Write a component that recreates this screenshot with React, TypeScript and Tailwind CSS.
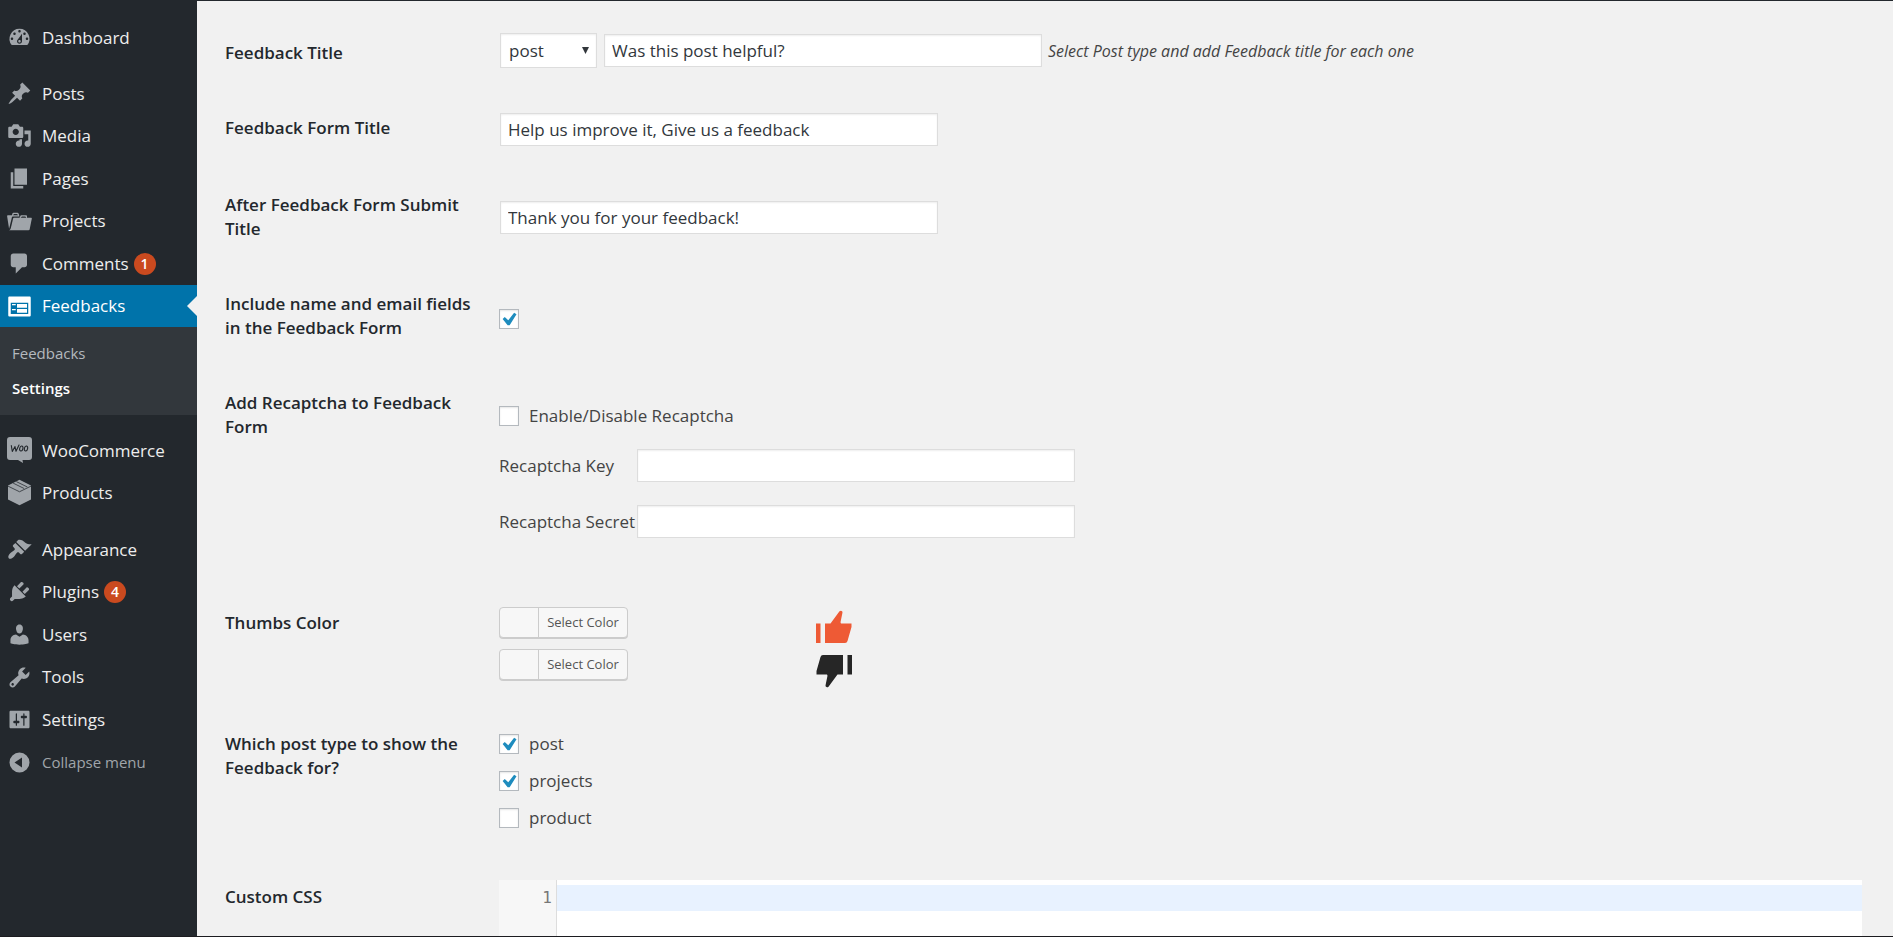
import { useState } from "react";
import type { ReactNode } from "react";

const ICONS = {
  dashboard:
    "M3.76 16h12.48A7.998 7.998 0 0 0 10 3a7.998 7.998 0 0 0-6.24 13zM10 4c.55 0 1 .45 1 1s-.45 1-1 1-1-.45-1-1 .45-1 1-1zM6 6c.55 0 1 .45 1 1s-.45 1-1 1-1-.45-1-1 .45-1 1-1zm8 0c.55 0 1 .45 1 1s-.45 1-1 1-1-.45-1-1 .45-1 1-1zm-5.37 5.55L12 7v6c0 1.1-.9 2-2 2s-2-.9-2-2c0-.57.24-1.08.63-1.45zM4 10c.55 0 1 .45 1 1s-.45 1-1 1-1-.45-1-1 .45-1 1-1zm12 0c.55 0 1 .45 1 1s-.45 1-1 1-1-.45-1-1 .45-1 1-1zm-5 3c0-.55-.45-1-1-1s-1 .45-1 1 .45 1 1 1 1-.45 1-1z",
  pin: "M10.44 3.02l1.82-1.82 6.36 6.35-1.83 1.82c-1.05-.68-2.48-.57-3.41.36l-.75.75c-.92.93-1.04 2.35-.35 3.41l-1.83 1.82-2.41-2.41-2.8 2.79c-.42.42-3.38 2.71-3.8 2.29s1.86-3.39 2.28-3.81l2.79-2.79L4.1 9.36l1.83-1.82c1.05.69 2.48.57 3.4-.36l.75-.75c.93-.92 1.05-2.35.36-3.41z",
  media:
    "M13 11V4c0-.55-.45-1-1-1h-1.67L9 1H5L3.67 3H2c-.55 0-1 .45-1 1v7c0 .55.45 1 1 1h10c.55 0 1-.45 1-1zM7 4.5c1.38 0 2.5 1.12 2.5 2.5S8.38 9.5 7 9.5 4.5 8.38 4.5 7 5.62 4.5 7 4.5zM14 6h5v10.5c0 1.38-1.12 2.5-2.5 2.5S14 17.88 14 16.5s1.12-2.5 2.5-2.5c.17 0 .34.02.5.05V9h-3V6zm-4 8.05V13h2v3.5c0 1.38-1.12 2.5-2.5 2.5S7 17.88 7 16.5 8.12 14 9.5 14c.17 0 .34.02.5.05z",
  page: "M6 15V2h10v13H6zm-1 1h8v2H3V5h2v11z",
  portfolio:
    "M4 5H.78c-.37 0-.74.32-.69.84l1.56 9.99S3.5 8.47 3.86 6.7c.11-.53.61-.7.98-.7H10s-.7-2.08-.77-2.31C9.11 3.25 8.89 3 8.45 3H5.14c-.36 0-.7.23-.8.64C4.25 4.04 4 5 4 5zm4.88 0h-4s.42-1 .87-1h2.13c.48 0 1 1 1 1zM2.67 16.25c-.31.47-.76.75-1.26.75h15.73c.54 0 .92-.31 1.03-.83.44-2.19 1.68-8.44 1.68-8.44.07-.5-.3-.73-.62-.73H16V5.53c0-.16-.26-.53-.66-.53h-3.76c-.52 0-.87.58-.87.58L10 7H5.59c-.32 0-.63.19-.69.5 0 0-1.59 6.7-1.72 7.33-.07.37-.22.99-.51 1.42zM15.38 7H11s.58-1 1.13-1h2.29c.71 0 .96 1 .96 1z",
  comment:
    "M5 2h9c1.1 0 2 .9 2 2v7c0 1.1-.9 2-2 2h-2l-5 5v-5H5c-1.1 0-2-.9-2-2V4c0-1.1.9-2 2-2z",
  feedback:
    "M2 2h16c.55 0 1 .45 1 1v14c0 .55-.45 1-1 1H2c-.55 0-1-.45-1-1V3c0-.55.45-1 1-1zm15 14V7H3v9h14zM4 8v1h3V8H4zm4 0v3h8V8H8zm-4 4v1h3v-1H4zm4 0v3h8v-3H8z",
  box: "M10 -.2L19.200 4.300V15.500L10 20.200.8 15.500V4.300z",
  appearance:
    "M14.48 11.06L7.41 3.99l1.5-1.5c.5-.56 2.3-.47 3.51.32 1.21.8 1.43 1.28 2.91 2.1 1.18.64 2.45 1.26 4.45.85zm-.71.71L6.7 4.7 4.93 6.47c-.39.39-.39 1.02 0 1.41l1.06 1.06c.39.39.39 1.03 0 1.42-.6.6-1.43 1.11-2.21 1.69-.35.26-.7.53-1.01.84C1.43 14.23.4 16.08 1.4 17.07c.99 1 2.84-.03 4.18-1.36.31-.31.58-.66.85-1.02.57-.78 1.08-1.61 1.69-2.21.39-.39 1.02-.39 1.41 0l1.06 1.06c.39.39 1.02.39 1.41 0z",
  plug: "M13.11 4.36L9.87 7.6 8 5.73l3.24-3.24c.35-.34 1.05-.2 1.56.32.52.51.66 1.21.31 1.55zm-8 1.77l.91-1.12 9.01 9.01-1.19.84c-.71.71-2.63 1.16-3.82 1.16H6.14L4.9 17.26c-.59.59-1.54.59-2.12 0-.59-.58-.59-1.53 0-2.12l1.24-1.24v-3.88c0-1.13.4-3.19 1.09-3.89zm7.26 3.97l3.24-3.24c.34-.35 1.04-.21 1.55.31.52.51.66 1.21.31 1.55l-3.24 3.25z",
  user: "M10 9.25c-2.27 0-2.73-3.44-2.73-3.44C7 4.02 7.82 2 9.97 2c2.16 0 2.98 2.02 2.71 3.81 0 0-.41 3.44-2.68 3.44zm0 2.57L12.72 10c2.39 0 4.52 2.33 4.52 4.53v2.49s-3.65 1.13-7.24 1.13c-3.65 0-7.24-1.13-7.24-1.13v-2.49c0-2.25 1.94-4.48 4.47-4.48z",
  wrench:
    "M16.68 9.77c-1.34 1.34-3.3 1.67-4.95.99l-5.41 6.52c-.99.99-2.59.99-3.58 0s-.99-2.59 0-3.57l6.52-5.42c-.68-1.65-.35-3.61.99-4.95 1.28-1.28 3.12-1.62 4.72-1.06l-2.89 2.89 2.82 2.82 2.86-2.87c.53 1.58.18 3.39-1.08 4.65zM3.81 16.21c.4.39 1.04.39 1.43 0 .4-.4.4-1.04 0-1.43-.39-.4-1.03-.4-1.43 0-.39.39-.39 1.03 0 1.43z",
  sliders:
    "M18 16V4c0-.55-.45-1-1-1H3c-.55 0-1 .45-1 1v12c0 .55.45 1 1 1h14c.55 0 1-.45 1-1zM8 11h1c.55 0 1 .45 1 1s-.45 1-1 1H8v1.5c0 .28-.22.5-.5.5s-.5-.22-.5-.5V13H6c-.55 0-1-.45-1-1s.45-1 1-1h1V5.5c0-.28.22-.5.5-.5s.5.22.5.5V11zm5-2h-1c-.55 0-1-.45-1-1s.45-1 1-1h1V5.5c0-.28.22-.5.5-.5s.5.22.5.5V7h1c.55 0 1 .45 1 1s-.45 1-1 1h-1v5.5c0 .28-.22.5-.5.5s-.5-.22-.5-.5V9z",
  collapse:
    "M10 2a8 8 0 1 0 0 16 8 8 0 0 0 0-16zM12 6v8L6 10z",
};

type IconName = keyof typeof ICONS;

function Icon({ name }: { name: IconName }) {
  return (
    <svg viewBox="0 0 20 20" className="size-[25px] shrink-0 overflow-visible" fill="currentColor" fillRule="evenodd" aria-hidden="true">
      <path d={ICONS[name]} />
      {name === "box" && (
        <path
          d="M.8 4.900L10 9.400l9.200-4.500M4.900 2.500l8.800 4.300M7.500 1.300l8.800 4.300"
          fill="none"
          stroke="#23282d"
          strokeWidth=".600"
        />
      )}
    </svg>
  );
}

function WooIcon() {
  return (
    <svg viewBox="0 0 25 26" className="h-[26px] w-[25px] shrink-0" aria-hidden="true">
      <path
        d="M3 0h19a3 3 0 0 1 3 3v17a3 3 0 0 1-3 3h-6.500l.5 3-5-3H3a3 3 0 0 1-3-3V3a3 3 0 0 1 3-3z"
        fill="currentColor"
      />
      <g fill="none" stroke="#23282d" strokeWidth="1.100" strokeLinecap="round" strokeLinejoin="round">
        <path d="M4.300 8.500l1 6 2.700-5 1 4.800L12 8" />
        <ellipse cx="14.300" cy="11.500" rx="1.600" ry="2.500" transform="rotate(14 14.300 11.500)" />
        <ellipse cx="19" cy="11.500" rx="1.600" ry="2.500" transform="rotate(14 19 11.500)" />
      </g>
    </svg>
  );
}

function NavItem({ icon, label, badge }: { icon: IconName | "woo"; label: string; badge?: number }) {
  return (
    <a href="#" className="flex items-center gap-[10px] pl-[7px] text-[17px] text-[#eeeeee]">
      <span className="text-[#a0a5aa]">{icon === "woo" ? <WooIcon /> : <Icon name={icon} />}</span>
      <span className="flex items-center gap-[5px]">
        {label}
        {badge !== undefined && (
          <span className="grid size-[22px] place-items-center rounded-full bg-[#ca4a1f] text-sm font-semibold text-white">
            {badge}
          </span>
        )}
      </span>
    </a>
  );
}

function Sidebar() {
  return (
    <nav className="flex w-[197px] shrink-0 flex-col bg-[#23282d] pt-4">
      <div className="grid h-[43px]">
        <NavItem icon="dashboard" label="Dashboard" />
      </div>
      <div className="mt-[13px] grid h-[213px] auto-rows-fr">
        <NavItem icon="pin" label="Posts" />
        <NavItem icon="media" label="Media" />
        <NavItem icon="page" label="Pages" />
        <NavItem icon="portfolio" label="Projects" />
        <NavItem icon="comment" label="Comments" badge={1} />
      </div>
      <a href="#" className="relative flex h-[42px] items-center gap-[10px] bg-[#0073aa] pl-[7px] text-[17px] text-white">
        <Icon name="feedback" />
        Feedbacks
        <span className="absolute top-1/2 right-0 -translate-y-1/2 border-y-10 border-r-10 border-y-transparent border-r-[#f1f1f1]" />
      </a>
      <div className="flex h-[88px] flex-col justify-center bg-[#32373c] pl-3 text-[15px] leading-[35px]">
        <a href="#" className="text-[#b4b9be]">
          Feedbacks
        </a>
        <a href="#" className="font-semibold text-white">
          Settings
        </a>
      </div>
      <div className="mt-[14px] grid h-[85px] auto-rows-fr">
        <NavItem icon="woo" label="WooCommerce" />
        <NavItem icon="box" label="Products" />
      </div>
      <div className="mt-[14px] grid h-[213px] auto-rows-fr">
        <NavItem icon="appearance" label="Appearance" />
        <NavItem icon="plug" label="Plugins" badge={4} />
        <NavItem icon="user" label="Users" />
        <NavItem icon="wrench" label="Tools" />
        <NavItem icon="sliders" label="Settings" />
      </div>
      <button type="button" className="flex h-[43px] items-center gap-[10px] pl-[7px] text-[15px] text-[#a0a5aa]">
        <Icon name="collapse" />
        Collapse menu
      </button>
    </nav>
  );
}

const FIELD =
  "border border-[#dddddd] bg-white text-[#32373c] shadow-[inset_0_1px_2px_rgba(0,0,0,0.07)] outline-none";

function TextInput({ id, value = "", label }: { id: string; value?: string; label?: string }) {
  return <input id={id} type="text" defaultValue={value} aria-label={label} className={`${FIELD} h-[33px] w-[438px] px-[7px] text-[17px]`} />;
}

function Checkbox({ id, checked = false, label }: { id: string; checked?: boolean; label?: string }) {
  const [on, setOn] = useState(checked);
  return (
    <span className="grid size-5 shrink-0">
      <input
        id={id}
        type="checkbox"
        checked={on}
        onChange={() => setOn(!on)}
        aria-label={label}
        className="col-start-1 row-start-1 size-5 appearance-none border border-[#b4b9be] bg-white shadow-[inset_0_1px_2px_rgba(0,0,0,0.1)]"
      />
      {on && (
        <svg viewBox="4.500 4 12 12" className="pointer-events-none col-start-1 row-start-1 m-[3px] size-[15px]" fill="#1e8cbe" aria-hidden="true">
          <path d="M14.200 4.500l1.900 1.200-5.500 8.800H9L5 9.500l1.700-1.600 2.800 2.700z" />
        </svg>
      )}
    </span>
  );
}

function Row({
  title,
  htmlFor,
  height,
  children,
  align = "items-center",
}: {
  title: string;
  htmlFor?: string;
  height: string;
  children: ReactNode;
  align?: string;
}) {
  return (
    <div className={`flex ${height}`}>
      <div className="w-[274px] shrink-0 pt-[25px] pr-5 text-[17px] leading-6 font-semibold text-[#23282d]">
        <label htmlFor={htmlFor}>{title}</label>
      </div>
      <div className={`flex min-w-0 flex-1 ${align}`}>{children}</div>
    </div>
  );
}

function ColorButton({ name }: { name: string }) {
  return (
    <button
      type="button"
      aria-label={`Select Color: ${name}`}
      className="flex h-[31px] w-[129px] rounded-[4px] border border-[#cccccc] bg-[#f7f7f7] text-[13px] text-[#555555] shadow-[0_1px_0_#cccccc]"
    >
      <span className="h-full w-[38px]" />
      <span className="flex h-full flex-1 items-center justify-center border-l border-[#cccccc]">Select Color</span>
    </button>
  );
}

function Thumb({ className }: { className: string }) {
  return (
    <svg viewBox="0 0 36 34" className={`h-[34px] w-9 ${className}`} fill="currentColor" aria-hidden="true">
      <path d="M0 13.500h4.500V33H0zM9 13.500h5.500L23.500 1.300Q25 0 26.300 1.500 26.700 2 26.300 3.500L24.500 12.300 25 13.500H35.500V17L31.500 31Q31 33 29 33H9z" />
    </svg>
  );
}

const POST_TYPES = [
  { name: "post", checked: true },
  { name: "projects", checked: true },
  { name: "product", checked: false },
];

export default function App() {
  return (
    <div className="flex min-h-screen border-b border-[#1c1c20] bg-[#f1f1f1] font-['Open_Sans','Noto_Sans',sans-serif] text-[17px] text-[#444444]">
      <Sidebar />
      <main className="flex min-w-0 flex-1 flex-col border-t border-[#23282d] pt-[15px] pr-[31px] pl-7">
        <Row title="Feedback Title" htmlFor="feedback-title" height="min-h-[75px]" align="items-start pt-[17px]">
          <div className="flex items-center">
            <span className="relative ml-px">
              <select aria-label="Post type" className={`${FIELD} block h-[35px] w-[97px] appearance-none px-2 text-[17px]`}>
                <option>post</option>
                <option>projects</option>
                <option>product</option>
              </select>
              <svg viewBox="0 0 8 8" className="pointer-events-none absolute top-[14px] right-2 size-[7px]" fill="#32373c" aria-hidden="true">
                <path d="M0 0h8L4 8z" />
              </svg>
            </span>
            <span className="ml-[7px]">
              <TextInput id="feedback-title" value="Was this post helpful?" />
            </span>
            <em className="ml-[6px] text-base">Select Post type and add Feedback title for each one</em>
          </div>
        </Row>

        <Row title="Feedback Form Title" htmlFor="form-title" height="min-h-[77px]">
          <span className="ml-px">
            <TextInput id="form-title" value="Help us improve it, Give us a feedback" />
          </span>
        </Row>

        <Row title="After Feedback Form Submit Title" htmlFor="submit-title" height="min-h-[99px]">
          <span className="ml-px">
            <TextInput id="submit-title" value="Thank you for your feedback!" />
          </span>
        </Row>

        <Row
          title="Include name and email fields in the Feedback Form"
          htmlFor="include-fields"
          height="min-h-[99px]"
          align="items-center pt-1"
        >
          <Checkbox id="include-fields" checked />
        </Row>

        <Row title="Add Recaptcha to Feedback Form" htmlFor="recaptcha" height="min-h-[220px]" align="items-start">
          <div className="pt-[38px]">
            <div className="flex h-6 items-center gap-[10px]">
              <Checkbox id="recaptcha" />
              <label htmlFor="recaptcha">Enable/Disable Recaptcha</label>
            </div>
            <div className="mt-[21px] grid grid-cols-[138px_auto] items-center gap-y-[23px]">
              <label htmlFor="recaptcha-key">Recaptcha Key</label>
              <TextInput id="recaptcha-key" />
              <label htmlFor="recaptcha-secret">Recaptcha Secret</label>
              <TextInput id="recaptcha-secret" />
            </div>
          </div>
        </Row>

        <Row title="Thumbs Color" height="min-h-[121px]" align="items-start">
          <div className="flex w-[317px] flex-col gap-[11px] pt-[21px]">
            <ColorButton name="thumbs up" />
            <ColorButton name="thumbs down" />
          </div>
          <div className="flex flex-col gap-[10px] pt-6">
            <Thumb className="text-[#ee5a35]" />
            <Thumb className="rotate-180 text-[#262626]" />
          </div>
        </Row>

        <Row title="Which post type to show the Feedback for?" height="min-h-[153px]" align="items-start">
          <div className="flex flex-col gap-[13px] pt-[25px]">
            {POST_TYPES.map((type) => (
              <div key={type.name} className="flex h-6 items-center gap-[10px]">
                <Checkbox id={`type-${type.name}`} checked={type.checked} />
                <label htmlFor={`type-${type.name}`}>{type.name}</label>
              </div>
            ))}
          </div>
        </Row>

        <Row title="Custom CSS" htmlFor="custom-css" height="flex-1" align="items-stretch pt-5">
          <div className="w-[58px] shrink-0 border-r border-[#dddddd] bg-[#f7f7f7] pt-[5px] pr-1 text-right font-['DejaVu_Sans_Mono',monospace] text-base leading-[26px] text-[#777777]">
            1
          </div>
          <div className="flex min-w-0 flex-1 bg-white pt-[5px]">
            <textarea
              id="custom-css"
              rows={1}
              className="h-[26px] w-full resize-none bg-[#e8f2ff] px-1 font-['DejaVu_Sans_Mono',monospace] text-base leading-[26px] outline-none"
            />
          </div>
        </Row>
      </main>
    </div>
  );
}
